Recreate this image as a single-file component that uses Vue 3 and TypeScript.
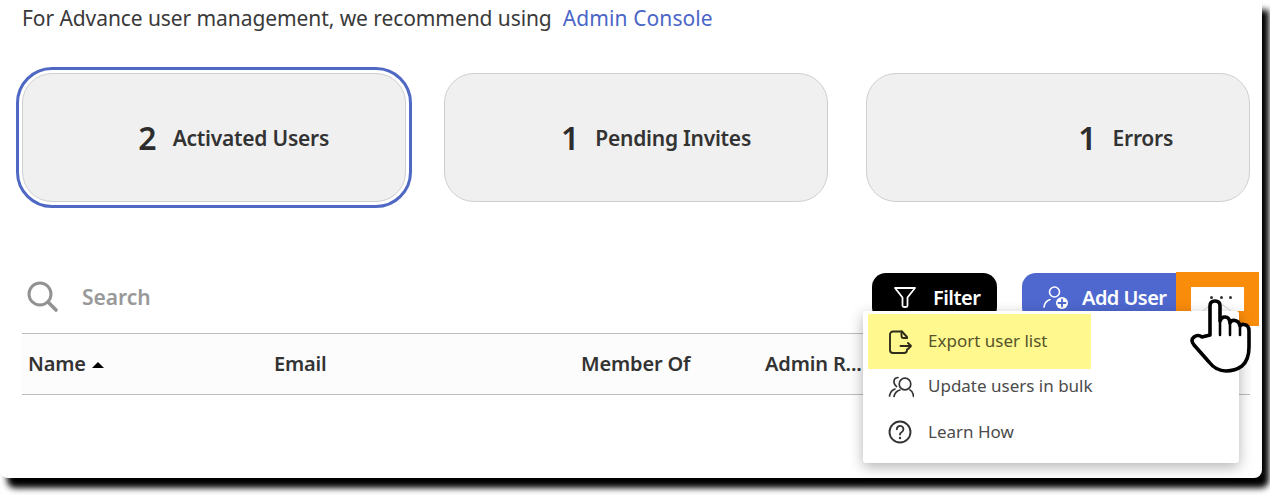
<script setup lang="ts">
interface Stat { count: number; label: string; active: boolean }
const stats: Stat[] = [
  { count: 2, label: 'Activated Users', active: true },
  { count: 1, label: 'Pending Invites', active: false },
  { count: 1, label: 'Errors', active: false },
]
</script>

<template>
  <div class="frame">
    <p class="notice">
      <span>For Advance user management, we recommend using</span>
      <a class="link">Admin Console</a>
    </p>

    <section class="cards">
      <div v-for="s in stats" :key="s.label" class="card" :class="{ active: s.active }">
        <span class="count">{{ s.count }}</span>
        <span class="label">{{ s.label }}</span>
      </div>
    </section>

    <section class="toolbar">
      <div class="search">
        <svg class="search-icon" viewBox="0 0 34 34" width="34" height="34" fill="none" stroke="#929292" stroke-width="3" stroke-linecap="round">
          <circle cx="15" cy="14" r="11" />
          <path d="M23 22 L31 30" stroke-width="3.6" />
        </svg>
        <span class="search-text">Search</span>
      </div>
      <button class="btn filter">
        <svg viewBox="0 0 24 24" width="24" height="24" fill="none" stroke="#fff" stroke-width="1.8" stroke-linejoin="round">
          <path d="M2 3 H22 L14.5 12.5 V20.5 Q14.5 22 13 22 H11 Q9.5 22 9.5 20.5 V12.5 Z" />
        </svg>
        <span>Filter</span>
      </button>
      <button class="btn add">
        <svg viewBox="0 0 28 28" width="28" height="28" fill="none" stroke="#fff" stroke-width="1.6" stroke-linecap="round">
          <circle cx="12.5" cy="9" r="5" />
          <path d="M2 24 Q3 18 8 16.5" />
          <circle cx="20" cy="20" r="6" fill="#fff" stroke="none" />
          <path d="M20 16.5 V23.5 M16.5 20 H23.5" stroke="#4e68cf" stroke-width="1.8" />
        </svg>
        <span>Add User</span>
      </button>
    </section>

    <section class="table-head">
      <div class="col col-name">Name <i class="sort"></i></div>
      <div class="col col-email">Email</div>
      <div class="col col-member">Member Of</div>
      <div class="col col-admin">Admin R...</div>
    </section>

    <div class="more-callout">
      <div class="more-btn"><i></i><i></i><i></i></div>
    </div>

    <div class="menu">
      <div class="item first">
        <svg viewBox="0 0 24 24" width="24" height="24" fill="none" stroke="#2f2d1a" stroke-width="1.9" stroke-linecap="round" stroke-linejoin="round">
          <path d="M19 8 V7 L14 1.5 H5 A3 3 0 0 0 2 4.5 V20 A3 3 0 0 0 5 23 H16 A3 3 0 0 0 19 20 V19.5" />
          <path d="M13.5 1.5 V6 A2 2 0 0 0 15.5 8 H19" />
          <path d="M12.5 16 H23 M20 13 L23 16 L20 19" />
        </svg>
        <span>Export user list</span>
      </div>
      <div class="item second">
        <svg viewBox="0 0 26 24" width="26" height="24" fill="none" stroke="#333" stroke-width="1.7" stroke-linecap="round">
          <circle cx="17" cy="10" r="5.8" />
          <path d="M6 22.5 Q7 17.5 12 16 M22 16 Q25 17.5 25.5 22.5" />
          <path d="M10 3.5 Q5.5 4 6 8.5 Q6.5 11 8.5 12.5 M7 15 Q2.5 16.5 1.5 22" />
        </svg>
        <span>Update users in bulk</span>
      </div>
      <div class="item third">
        <svg viewBox="0 0 24 24" width="24" height="24" fill="none" stroke="#333" stroke-width="1.9" stroke-linecap="round">
          <circle cx="12" cy="12" r="10.5" />
          <path d="M8.8 9.2 A3.3 3.3 0 1 1 13.8 12 Q12 13 12 14.6" />
          <path d="M12 18 V18.1" stroke-width="2.4" />
        </svg>
        <span>Learn How</span>
      </div>
    </div>

    <svg class="hand" viewBox="1186 296 68 80" width="68" height="80">
      <path d="M1203 311 L1216 300 L1231 311" fill="none" stroke="#c9c9c9" stroke-width="1" />
      <path
        d="M1210 335 L1210 306 Q1210 301 1215 301 Q1220 301 1220 306 L1220 321 Q1221 317 1225 317 Q1229.5 317 1230 323 Q1231 320 1235 320.5 Q1239 321 1240 326 Q1241 324 1244 324.5 Q1249 325 1249 331 L1249 347 Q1249 360 1242 366 Q1235 371 1226 371 Q1216 371 1209 362 L1194 345 Q1190 340 1194 337 Q1198 334 1202 337 Z"
        fill="#fff" stroke="#000" stroke-width="3.6" stroke-linejoin="round"
      />
      <path d="M1220 321 V335 M1230 323 V335 M1240 326 V335" fill="none" stroke="#000" stroke-width="2.6" stroke-linecap="round" />
    </svg>
  </div>
</template>

<style>
html, body { margin: 0; height: 495px; background: #fff; overflow: hidden; }
</style>

<style scoped>
.frame {
  position: relative;
  box-sizing: border-box;
  width: 1262px;
  height: 478px;
  padding: 0 12px 0 22px;
  background: #fff;
  border-radius: 0 0 8px 8px;
  box-shadow: 7px 10px 6px #000;
  font-family: "Noto Sans", sans-serif;
  color: #2c2c2c;
}
.notice {
  margin: 0;
  height: 36px;
  line-height: 36px;
  font-size: 21px;
  letter-spacing: -0.08px;
  color: #3a3a3a;
  display: flex;
  gap: 11px;
}
.link { color: #4b66c8; letter-spacing: 0.1px; }
.cards {
  margin-top: 37px;
  display: grid;
  grid-template-columns: repeat(3, 384px);
  gap: 38px;
}
.card {
  box-sizing: border-box;
  height: 129px;
  padding: 0 76px 0 0;
  display: flex;
  align-items: center;
  justify-content: flex-end;
  gap: 16px;
  background: #f0f0f0;
  border: 1px solid #cfcfcf;
  border-radius: 30px;
}
.card.active {
  outline: 3px solid #4e68c4;
  outline-offset: 3px;
}
.count { font-size: 32px; font-weight: 600; color: #2c2c2c; }
.label { font-size: 21px; letter-spacing: -0.25px; font-weight: 600; color: #333; margin-top: 1px; }
.toolbar {
  margin-top: 71px;
  height: 60px;
  padding-right: 74px;
  display: flex;
  align-items: flex-start;
}
.search {
  flex: 1;
  display: flex;
  align-items: center;
  gap: 23px;
  height: 48px;
  padding-left: 3px;
}
.search-text { font-size: 21px; font-weight: 600; color: #999; }
.btn {
  box-sizing: border-box;
  height: 48px;
  border: 0;
  display: flex;
  align-items: center;
  white-space: nowrap;
  font-family: inherit;
  font-size: 20px;
  letter-spacing: -0.55px;
  font-weight: 600;
  color: #fff;
}
.filter {
  width: 125px;
  margin-right: 25px;
  padding-left: 21px;
  gap: 16px;
  background: #000;
  border-radius: 14px;
}
.add {
  width: 154px;
  padding-left: 20px;
  gap: 12px;
  background: #4e68cf;
  border-radius: 14px 0 0 14px;
}
.table-head {
  box-sizing: border-box;
  height: 62px;
  padding: 0 0 2px 6px;
  display: grid;
  grid-template-columns: 246px 307px 184px 1fr;
  align-items: center;
  background: #fcfcfc;
  border-top: 1px solid #bdbdbd;
  border-bottom: 1px solid #bdbdbd;
  font-size: 20px;
  letter-spacing: -0.15px;
  font-weight: 600;
  color: #333;
}
.sort {
  display: inline-block;
  width: 0;
  height: 0;
  margin-left: 1px;
  vertical-align: middle;
  border-left: 6px solid transparent;
  border-right: 6px solid transparent;
  border-bottom: 6px solid #000;
}
.more-callout {
  position: absolute;
  left: 1176px;
  top: 272px;
  box-sizing: border-box;
  width: 83px;
  height: 54px;
  padding: 15px;
  background: #fa8c0c;
}
.more-btn {
  height: 24px;
  padding-left: 7px;
  background: #fff;
  display: flex;
  align-items: center;
  justify-content: center;
  gap: 6.5px;
}
.more-btn i {
  width: 3px;
  height: 3px;
  border-radius: 50%;
  background: #333;
  margin-top: -3px;
}
.menu {
  position: absolute;
  left: 863px;
  top: 311px;
  box-sizing: border-box;
  width: 376px;
  height: 152px;
  padding: 3px 5px;
  background: #fff;
  border-radius: 3px;
  box-shadow: 0 4px 14px rgba(0, 0, 0, 0.3);
  font-size: 17px;
  color: #4b4b4b;
}
.item {
  display: flex;
  align-items: center;
  gap: 16px;
  width: 223px;
  height: 34px;
  padding-left: 20px;
  box-sizing: border-box;
  white-space: nowrap;
}
.item svg { flex-shrink: 0; }
.item span { margin-top: -2px; }
.item.first {
  height: 55px;
  background: #fff88f;
  color: #55532a;
}
.item.second { gap: 14px; }
.item.third { margin-top: 12px; }
.hand {
  position: absolute;
  left: 1186px;
  top: 296px;
}
</style>
